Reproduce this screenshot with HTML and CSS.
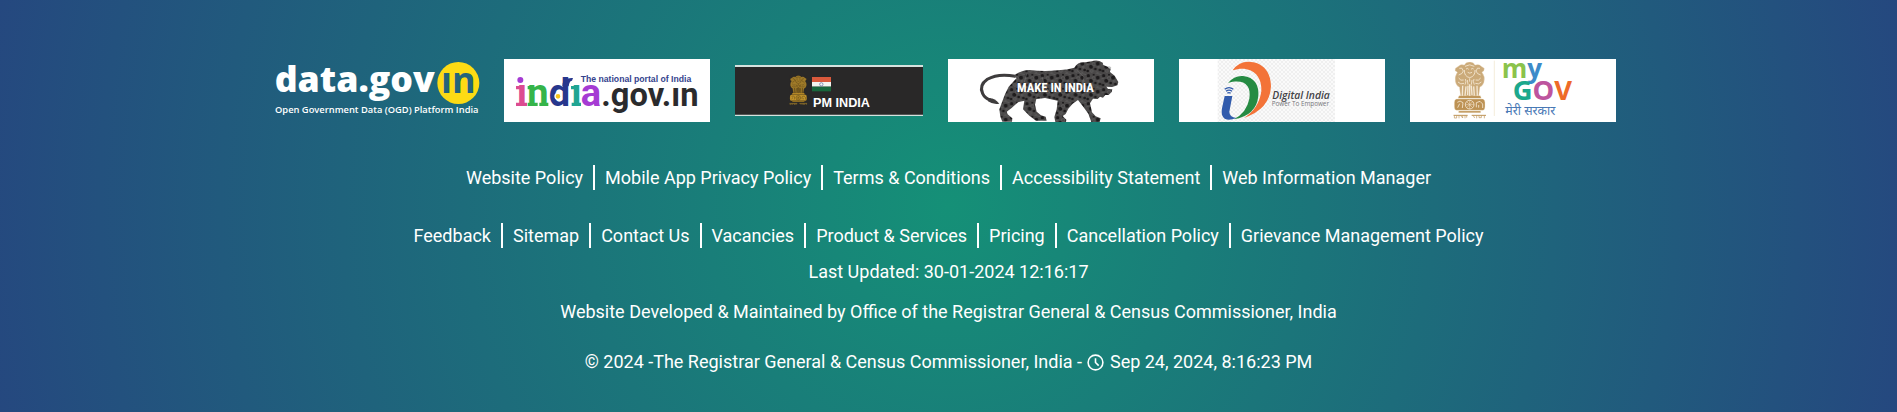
FILE: index.html
```html
<!DOCTYPE html>
<html lang="en">
<head>
<meta charset="utf-8">
<title>Census of India</title>
<link rel="stylesheet" href="styles.css">
</head>
<body>
<footer class="footer">
  <svg class="defs" width="0" height="0" aria-hidden="true">
    <defs>
      <symbol id="emblem" viewBox="0 0 98 172" preserveAspectRatio="none">
        <g fill="currentColor">
          <path d="M33 10Q38 0 49 1Q60 0 65 10Q78 5 84 14L93 20L92 27L86 32Q97 45 92 62Q87 75 80 76L76 105H22L18 76Q9 73 6 60Q3 44 12 32L5 27L6 20L15 14Q22 5 33 10Z" opacity=".78"/>
          <path d="M17 102H81L84 110H14ZM10 112H88Q96 113 95 129Q96 146 88 146H10Q2 146 3 129Q2 113 10 112ZM16 148H82V153H16Z"/>
        </g>
        <g fill="none" stroke-width="2.5">
          <path d="M35 14Q49 5 63 14M38 22Q43 18 46 23M53 23Q56 18 61 22M43 32Q49 37 56 32M33 25Q32 44 49 48Q66 44 65 25M18 20Q27 15 30 28Q28 37 16 40M80 20Q71 15 68 28Q70 37 82 40"/>
          <path d="M16 49Q22 59 31 55M82 49Q76 59 67 55M14 61Q22 70 32 65M84 61Q76 70 66 65M36 52Q40 59 35 69M62 52Q58 59 63 69M49 50V60M42 55L44 69M56 55L54 69"/>
          <path d="M28 72L27 102M38 74L35 102M44 72L43 100M54 72L56 100M61 74L63 102M71 72L72 102M49 68V102" stroke-width="4"/>
          <circle cx="49" cy="129" r="13"/><path d="M36 129H62M49 116V142M40 120L58 138M58 120L40 138" stroke-width="1.5"/>
          <path d="M12 122Q20 114 29 123L27 139M13 138L19 126M69 137V123L80 119L88 127V139M76 138V130"/>
        </g>
        <g fill="none" stroke="currentColor" stroke-width="3"><path d="M0 161H43M55 161H98"/><path d="M3 162V169H10V162M17 162V170M22 162L28 169V162M35 162V170M40 162V168M60 162L64 169M70 162V170M77 162V168H84V162M93 162V170" stroke-width="2"/></g>
      </symbol>
      <pattern id="checker" width="12" height="12" patternUnits="userSpaceOnUse">
        <rect width="12" height="12" fill="#fafafa"/><path d="M0 0H6V6H0ZM6 6H12V12H6Z" fill="#efefef"/>
      </pattern>
      <pattern id="gears" width="46" height="42" patternUnits="userSpaceOnUse">
        <rect width="46" height="42" fill="#4a4848"/>
        <g fill="#1d1b1c"><circle cx="7" cy="8" r="5"/><circle cx="23" cy="5" r="3"/><circle cx="35" cy="14" r="6"/><circle cx="15" cy="23" r="6"/><circle cx="28" cy="30" r="4"/><circle cx="42" cy="33" r="4"/><circle cx="5" cy="36" r="4"/></g>
        <g fill="none" stroke="#777" stroke-width="1"><circle cx="23" cy="16" r="5"/><circle cx="38" cy="24" r="3"/><circle cx="17" cy="36" r="4"/><path d="M0 18L9 15M29 0L46 5M30 38L38 42"/></g>
      </pattern>
    </defs>
  </svg>

  <nav class="partners" aria-label="Partner portals">
    <a class="partner" href="#" aria-label="data.gov.in">
      <svg class="logo" viewBox="0 0 618 189">
        <text class="open heavy" x="5" y="100" font-size="107" fill="#fff">data.gov</text>
        <circle cx="556" cy="72" r="63" fill="#fddb14"/>
        <text class="open bold" x="504" y="103" font-size="108" fill="#24647a">ın</text>
        <text class="open semi" x="6" y="161" font-size="28" fill="#fff">Open Government Data (OGD) Platform India</text>
      </svg>
    </a>
    <a class="partner" href="#" aria-label="india.gov.in">
      <svg class="logo logo-white" viewBox="0 0 618 189">
        <text class="roboto bold" font-size="114" y="141"><tspan x="38" fill="#dc4c91">ı</tspan><tspan x="70" fill="#35b44a">n</tspan><tspan x="134" fill="#27378d">d</tspan><tspan x="202" fill="#20a592">ı</tspan><tspan x="230" fill="#a53bd3">a</tspan></text>
        <circle cx="49" cy="63" r="9" fill="#a53bd3"/>
        <path d="M175 82Q175 55 207 57L204 65Q196 65 194 82Z" fill="#27378d"/>
        <path d="M36 81H50V91H36ZM36 131H69V141H36Z" fill="#dc4c91"/>
        <path d="M71 81H84V91H71ZM71 131H101V141H71ZM106 131H133V141H106Z" fill="#35b44a"/>
        <path d="M201 81H216V91H201ZM203 131H231V141H203Z" fill="#20a592"/>
        <circle cx="162" cy="112" r="9" fill="#f7c51c" stroke="#fff" stroke-width="4"/>
        <text class="roboto bold" x="292" y="141" font-size="98" fill="#2b2b2d">.gov.ın</text>
        <text class="arial bold" x="230" y="69" font-size="26" fill="#34438d">The national portal of India</text>
      </svg>
    </a>
    <a class="partner" href="#" aria-label="PM India">
      <svg class="logo logo-pm" viewBox="0 0 564 153">
        <rect width="564" height="153" fill="#292828"/>
        <path d="M0 0H564V6H0ZM0 149H564V153H0Z" fill="#d5e2de"/>
        <use class="gold" href="#emblem" x="163" y="31" width="54" height="90"/>
        <path d="M231 36H288V51H231Z" fill="#d9593c"/><path d="M231 51H288V65H231Z" fill="#f2f3ef"/><path d="M231 65H288V79H231Z" fill="#18663c"/>
        <circle cx="259" cy="58" r="5" fill="none" stroke="#5667a0" stroke-width="2"/>
        <text class="arial bold" x="234" y="127" font-size="38" fill="#fff">PM INDIA</text>
      </svg>
    </a>
    <a class="partner" href="#" aria-label="Make in India">
      <svg class="logo logo-white" viewBox="0 0 618 189">
        <path d="M202 52Q150 42 118 61Q92 79 104 104Q111 119 128 123" fill="none" stroke="#3e3c3d" stroke-width="9"/>
        <path d="M121 118Q138 115 154 134Q136 138 120 127Z" fill="#3e3c3d"/>
        <path fill="url(#gears)" d="M195 53Q213 34 245 33Q287 38 329 34Q358 32 379 26Q390 7 412 10L431 7Q449 1 464 11L466 18L479 23L487 31L486 39L500 50L511 69L508 79L493 84L479 84L480 90L493 91L491 99L482 108L472 108L465 116L456 113L449 120L435 119L426 133L432 160L443 172L458 178L455 189H430L421 164L404 141L390 123L374 134L361 149L353 165L344 171L355 182L354 189H322L319 174L326 151L329 125L291 117L265 120L261 137L266 158L279 169L293 173L296 185H264L244 170L225 151L229 125L210 130L190 148L176 158L179 166L193 178L192 188H163L157 173L154 151L171 106L182 83L206 57Z"/>
        <path d="M482 23L488 25L487 34ZM388 35L408 54L403 78L414 94M282 53L289 78L306 103M236 44L229 69" stroke="#777" stroke-width="1.5" fill="none"/>
        <path d="M475 83L492 84L481 91Z" fill="#fff"/>
        <text class="condensed" x="207" y="100" font-size="38" fill="#fff">MAKE IN INDIA</text>
      </svg>
    </a>
    <a class="partner" href="#" aria-label="Digital India">
      <svg class="logo logo-white" viewBox="0 0 618 189">
        <rect x="116" width="352" height="189" fill="url(#checker)"/>
        <path d="M161 34Q178 8 208 8C250 9 276 36 276 82Q273 151 194 177Q239 151 247 97C251 45 211 17 161 34Z" fill="#f37338"/>
        <path d="M147 72Q166 49 192 51C226 54 241 79 238 111Q232 170 164 181Q203 161 211 119C218 77 193 59 147 72Z" fill="#268b43"/>
        <path d="M137 111H160L151 158Q151 174 172 177Q150 186 137 179Q125 171 129 148Z" fill="#315bac"/>
        <path d="M145 103Q150 99 155 103M141 97Q150 90 159 97M137 91Q150 81 163 91" fill="none" stroke="#315bac" stroke-width="4"/>
        <text class="open semi italic" x="280" y="119" font-size="31" fill="#434347">Digital India</text>
        <text class="open" x="278" y="141" font-size="19" fill="#77777a">Power To Empower</text>
      </svg>
    </a>
    <a class="partner" href="#" aria-label="MyGov">
      <svg class="logo logo-white" viewBox="0 0 618 189">
        <use class="bronze" href="#emblem" x="130" y="8" width="98" height="172"/>
        <path d="M253 5V171" stroke="#eee4c9" stroke-width="2"/>
        <text class="open bold" x="275" y="56" font-size="78"><tspan fill="#8bc34b">m</tspan><tspan fill="#3d8bc9">y</tspan></text>
        <text class="open bold" x="308" y="123" font-size="82"><tspan fill="#1ca88c">G</tspan><tspan fill="#bd559e">O</tspan><tspan fill="#ee6b28">V</tspan></text>
        <text class="hindi" x="286" y="168" font-size="37" fill="#4878b5">मेरी सरकार</text>
      </svg>
    </a>
  </nav>

  <nav aria-label="Policies">
    <ul class="links">
      <li><a href="#">Website Policy</a></li>
      <li><a href="#">Mobile App Privacy Policy</a></li>
      <li><a href="#">Terms &amp; Conditions</a></li>
      <li><a href="#">Accessibility Statement</a></li>
      <li><a href="#">Web Information Manager</a></li>
    </ul>
    <ul class="links">
      <li><a href="#">Feedback</a></li>
      <li><a href="#">Sitemap</a></li>
      <li><a href="#">Contact Us</a></li>
      <li><a href="#">Vacancies</a></li>
      <li><a href="#">Product &amp; Services</a></li>
      <li><a href="#">Pricing</a></li>
      <li><a href="#">Cancellation Policy</a></li>
      <li><a href="#">Grievance Management Policy</a></li>
    </ul>
  </nav>
  <p class="updated">Last Updated: 30-01-2024 12:16:17</p>
  <p class="credit">Website Developed &amp; Maintained by Office of the Registrar General &amp; Census Commissioner, India</p>
  <p class="copyright">© 2024 -The Registrar General &amp; Census Commissioner, India - <svg class="clock" viewBox="0 0 18 18" aria-hidden="true"><circle cx="9" cy="9" r="7"/><path d="M9 5V9L12 12"/></svg> Sep 24, 2024, 8:16:23 PM</p>
</footer>
</body>
</html>
```
FILE: styles.css
```css
* { box-sizing: border-box; }

body {
  margin: 0;
  font-family: Roboto, "Liberation Sans", sans-serif;
  font-size: 18px;
  line-height: 25px;
  color: #fff;
}

.footer {
  min-height: 100vh;
  padding: 59px 0 36px;
  background: radial-gradient(circle, #159077, #25487f);
  text-align: center;
}

.defs { position: absolute; }

.partners {
  display: flex;
  flex-wrap: wrap;
  align-items: center;
  justify-content: center;
  gap: 25px;
  padding-right: 8px;
  margin-bottom: 43px;
}

.partner { display: block; }
.logo { display: block; width: 206px; height: 63px; overflow: visible; }
.logo-white { background: #fff; }
.logo-pm { width: 188px; height: 51px; }

.open { font-family: "Open Sans", sans-serif; }
.roboto { font-family: Roboto, sans-serif; }
.arial { font-family: "Liberation Sans", sans-serif; }
.hindi { font-family: "Noto Sans Devanagari", "Noto Sans", sans-serif; }
.condensed { font-family: "Liberation Sans Narrow", "Roboto Condensed", "DejaVu Sans Condensed", sans-serif; font-weight: 700; }
.semi { font-weight: 600; }
.bold { font-weight: 700; }
.heavy { font-weight: 800; }
.italic { font-style: italic; }
.gold { color: #c2942b; stroke: #554117; }
.bronze { color: #bd9254; stroke: #f5e9d5; }

.links {
  display: flex;
  flex-wrap: wrap;
  justify-content: center;
  margin: 0;
  padding: 0;
  list-style: none;
}
.links + .links { margin-top: 33px; }
.links li { padding: 1px 10px 0; line-height: 24px; }
.links li + li { border-left: 2px solid #fff; }
.links a { color: inherit; text-decoration: none; }

p { margin: 0; }
.updated { margin-top: 11px; }
.credit { margin-top: 15px; }
.copyright { margin-top: 25px; }

.clock {
  width: 19px;
  height: 19px;
  vertical-align: -4px;
  fill: none;
  stroke: #fff;
  stroke-width: 1.5;
}
```
